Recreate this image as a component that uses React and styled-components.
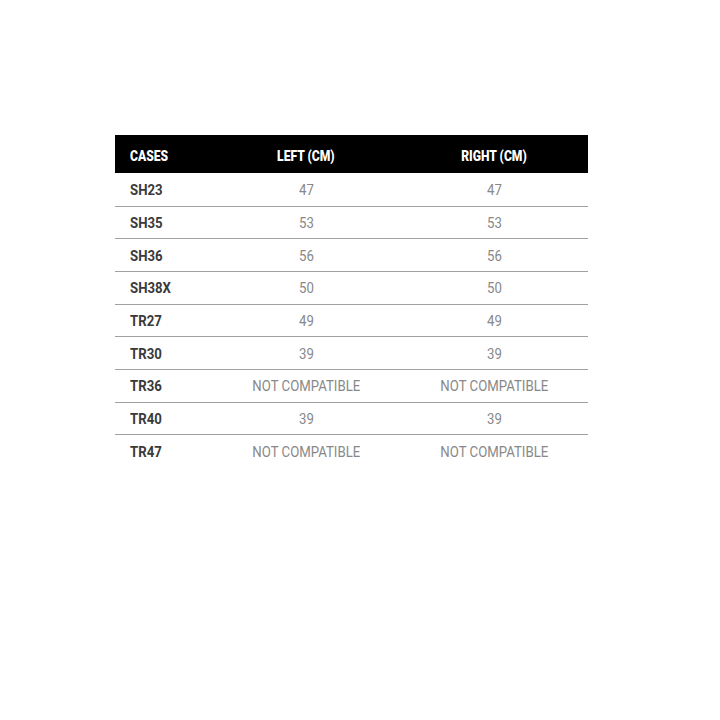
import React from "react";
import styled, { createGlobalStyle } from "styled-components";

const Global = createGlobalStyle`
  html, body { margin: 0; padding: 0; background: #fff; }
  body { font-family: "Roboto", "Liberation Sans", sans-serif; }
`;

const Page = styled.div`
  width: 720px;
  height: 720px;
  padding: 135px 0 0 115px;
  box-sizing: border-box;
`;

const Table = styled.div`
  width: 473px;
  display: grid;
  grid-template-columns: 97px 188px 188px;
`;

const HeadCell = styled.div`
  background: #000;
  color: #fff;
  height: 38px;
  padding-top: 3px;
  box-sizing: border-box;
  display: flex;
  align-items: center;
  justify-content: ${(p) => (p.$first ? "flex-start" : "center")};
  padding-left: ${(p) => (p.$first ? "15px" : "0")};
  font-size: 15.5px;
  font-weight: 900;
`;

const Cell = styled.div`
  height: ${(p) => (p.$top ? "33.5px" : "32.7px")};
  padding-top: 1px;
  box-sizing: border-box;
  display: flex;
  align-items: center;
  justify-content: ${(p) => (p.$first ? "flex-start" : "center")};
  padding-left: ${(p) => (p.$first ? "15px" : "0")};
  border-bottom: ${(p) => (p.$last ? "none" : "1px solid #a0a0a0")};
  font-size: 15px;
  font-weight: ${(p) => (p.$first ? 700 : 400)};
  color: ${(p) => (p.$first ? "#3a3a3a" : "#888888")};
`;

const Narrow = styled.span`
  display: inline-block;
  white-space: nowrap;
  transform: scaleX(${(p) => p.$scale || 0.88});
  transform-origin: ${(p) => (p.$first ? "left center" : "center center")};
`;

const rows = [
  ["SH23", "47", "47"],
  ["SH35", "53", "53"],
  ["SH36", "56", "56"],
  ["SH38X", "50", "50"],
  ["TR27", "49", "49"],
  ["TR30", "39", "39"],
  ["TR36", "NOT COMPATIBLE", "NOT COMPATIBLE"],
  ["TR40", "39", "39"],
  ["TR47", "NOT COMPATIBLE", "NOT COMPATIBLE"],
];

const heads = ["CASES", "LEFT (CM)", "RIGHT (CM)"];

export default function App() {
  return (
    <>
      <Global />
      <Page>
        <Table>
          {heads.map((h, j) => (
            <HeadCell key={h} $first={j === 0}>
              <Narrow $first={j === 0} $scale={0.78}>{h}</Narrow>
            </HeadCell>
          ))}
          {rows.map((r, i) =>
            r.map((v, j) => (
              <Cell
                key={i + "-" + j}
                $first={j === 0}
                $top={i === 0}
                $last={i === rows.length - 1}
              >
                <Narrow $first={j === 0} $scale={0.88}>{v}</Narrow>
              </Cell>
            ))
          )}
        </Table>
      </Page>
    </>
  );
}
